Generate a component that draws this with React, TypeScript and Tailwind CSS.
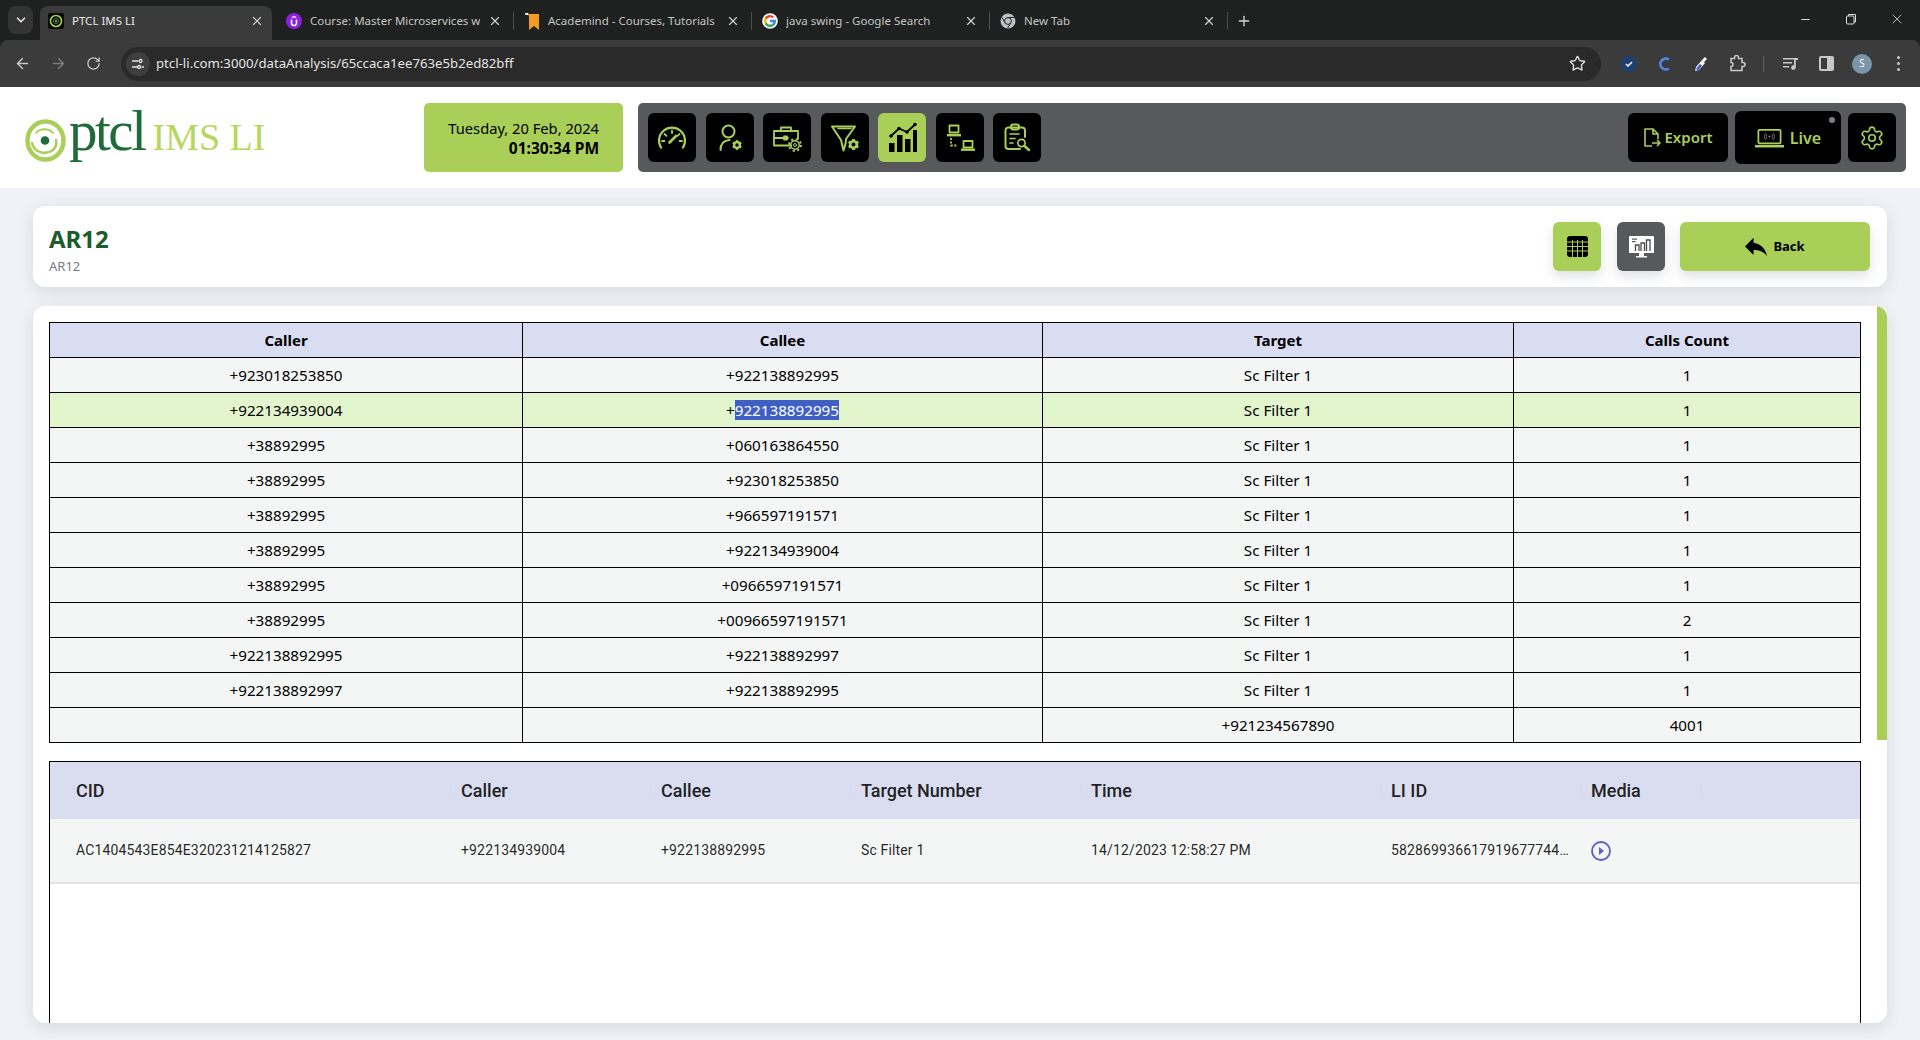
import React from "react";
import { ArrowLeft, ArrowRight, RotateCw, Star, X, Plus, Minus, ChevronDown, Settings } from "lucide-react";

const G = "#a9cf58";

function GearSolid({ cx, cy, r, color }: { cx: number; cy: number; r: number; color: string }) {
  return (
    <g>
      <circle cx={cx} cy={cy} r={r * 0.72} fill="none" stroke={color} strokeWidth={r * 0.56} />
      {[0, 60, 120].map((a) => (
        <rect key={a} x={cx - r * 0.3} y={cy - r * 1.2} width={r * 0.6} height={r * 2.4} fill={color} transform={`rotate(${a} ${cx} ${cy})`} />
      ))}
      <circle cx={cx} cy={cy} r={r * 0.42} fill="#000" />
    </g>
  );
}

function NavIcon({ kind, color }: { kind: number; color: string }) {
  const s = { fill: "none", stroke: color, strokeWidth: 1.8, strokeLinecap: "round" as const, strokeLinejoin: "round" as const };
  return (
    <svg width="34" height="34" viewBox="0 0 34 34">
      {kind === 0 && (
        <g {...s}>
          <path d="M6 26.5 A 13 13 0 1 1 28 26.5" strokeWidth="2.2" />
          <path d="M17 9.5v2.5M9.5 13l2 1.8M24.5 13l-2 1.8M7 20h2.4M27 20h-2.4" />
          <path d="M14.5 21.5 L21 15" strokeWidth="2.6" />
        </g>
      )}
      {kind === 1 && (
        <g>
          <circle cx="15.5" cy="10.5" r="6" {...s} strokeWidth="2" />
          <path d="M7.5 29c0-6 3.5-9.5 9-10" {...s} strokeWidth="2" />
          <GearSolid cx={24} cy={24} r={4} color={color} />
        </g>
      )}
      {kind === 2 && (
        <g>
          <g {...s}>
            <path d="M21 24.5H4V10h24v8" />
            <path d="M4 17h14M11 10V6.5h10V10" />
            <path d="M14 15.5h3v3h-3z" />
          </g>
          <circle cx="25" cy="24" r="4.2" {...s} strokeWidth="1.5" />
          <circle cx="25" cy="24" r="6" fill="none" stroke={color} strokeWidth="1.8" strokeDasharray="2.2 2.5" />
          <circle cx="25" cy="24" r="1.5" {...s} strokeWidth="1" />
        </g>
      )}
      {kind === 3 && (
        <g>
          <path d="M4 5.5h23l-9 12.5-.5 5-2 6.5-2.5-10.500z" {...s} strokeWidth="2" />
          <path d="M10 7.5h13" {...s} strokeWidth="1.5" />
          <GearSolid cx={25.5} cy={23.5} r={4.6} color={color} />
        </g>
      )}
      {kind === 4 && (
        <g fill={color}>
          <rect x="4" y="22" width="5.5" height="9" />
          <rect x="12" y="14" width="5.5" height="17" />
          <rect x="20" y="18" width="5.5" height="13" />
          <rect x="28" y="9" width="4" height="22" />
          <path d="M6 15 L14 7.5 L22 11 L30 3.5" fill="none" stroke={color} strokeWidth="1.8" />
          <circle cx="6" cy="15" r="1.8" />
          <circle cx="14" cy="7.5" r="1.8" />
          <circle cx="22" cy="11" r="1.8" />
          <circle cx="30" cy="3.5" r="1.8" />
        </g>
      )}
      {kind === 5 && (
        <g>
          <rect x="6.5" y="4.5" width="9" height="7" {...s} strokeWidth="1.8" />
          <rect x="4" y="13" width="14" height="2.4" fill={color} />
          <rect x="20.5" y="20" width="9" height="6.5" {...s} strokeWidth="1.8" />
          <rect x="18" y="27.5" width="14" height="2.4" fill={color} />
          <path d="M8 17v7.5h7" fill="none" stroke={color} strokeWidth="1.8" strokeDasharray="2 1.6" />
        </g>
      )}
      {kind === 6 && (
        <g {...s} strokeWidth="2">
          <path d="M20 28H8a3 3 0 0 1-2.5-3V9A3 3 0 0 1 8 6.5h14A3 3 0 0 1 25 9v7" />
          <rect x="11" y="3.5" width="8" height="5" rx="2.2" />
          <path d="M10 13h9M10 17.500h5M10 22h3" strokeWidth="1.7" />
          <circle cx="21.5" cy="22" r="3.6" strokeWidth="1.7" />
          <path d="M24.5 25l4.5 4" strokeWidth="2.4" />
        </g>
      )}
    </svg>
  );
}

function Favicon({ kind }: { kind: number }) {
  if (kind === 0)
    return (
      <svg width="16" height="16" viewBox="0 0 16 16" className="shrink-0">
        <rect width="16" height="16" rx="2" fill="#050805" />
        <circle cx="8" cy="8" r="5.5" fill="none" stroke={G} strokeWidth="1.6" />
        <circle cx="8" cy="8" r="2.6" fill="none" stroke="#2f7d46" strokeWidth="1" />
        <circle cx="8" cy="8" r="1" fill={G} />
      </svg>
    );
  if (kind === 1)
    return (
      <svg width="16" height="16" viewBox="0 0 16 16" className="shrink-0">
        <circle cx="8" cy="8" r="8" fill="#8f1fe0" />
        <path d="M5.5 6.5v3.6a2.5 2.5 0 0 0 5 0V6.5" fill="none" stroke="#fff" strokeWidth="1.5" />
        <path d="M5.8 4.8L8 3.4l2.2 1.4" fill="none" stroke="#fff" strokeWidth="1.2" />
      </svg>
    );
  if (kind === 2)
    return (
      <svg width="16" height="18" viewBox="0 0 16 18" className="shrink-0">
        <path d="M1 1h3l1 1h10v16l-5-4-5 4V3.5L1 2.5z" fill="#f59a23" />
        <path d="M1 1h3v2H2z" fill="#fff" />
      </svg>
    );
  if (kind === 3)
    return (
      <svg width="16" height="16" viewBox="0 0 48 48" className="shrink-0">
        <circle cx="24" cy="24" r="23.500" fill="#fff" />
        <path fill="#EA4335" d="M24 6a18 18 0 0 1 12.200 4.700l-5 5A11 11 0 0 0 14 19.500l-6-4.600A18 18 0 0 1 24 6z" />
        <path fill="#4285F4" d="M42 24.500c0-1.500-.1-2.800-.4-4H24v7.500h10c-.5 2.500-2 4.500-4 5.800l6 4.700C39.700 35 42 30.200 42 24.500z" />
        <path fill="#FBBC05" d="M14 28.300a11 11 0 0 1 0-8.800l-6-4.600a18 18 0 0 0 0 18z" />
        <path fill="#34A853" d="M24 42c4.800 0 9-1.600 12-4.500L30 32.800c-1.600 1.100-3.600 1.700-6 1.700-4.700 0-8.600-3-10-6.200l-6 4.600C11 38.500 17 42 24 42z" />
      </svg>
    );
  return (
    <svg width="16" height="16" viewBox="0 0 16 16" className="shrink-0">
      <circle cx="8" cy="8" r="7.500" fill="#bdc1c6" />
      <path d="M8 4.500h6.500M5 9.700L1.800 4.300M10.900 9.800L7.500 15.300" stroke="#202124" strokeWidth="1" />
      <circle cx="8" cy="8" r="3.400" fill="#bdc1c6" stroke="#202124" strokeWidth="1" />
    </svg>
  );
}

const tabs = [
  { t: "PTCL IMS LI", f: 0 },
  { t: "Course: Master Microservices with Spring", f: 1 },
  { t: "Academind - Courses, Tutorials & More", f: 2 },
  { t: "java swing - Google Search", f: 3 },
  { t: "New Tab", f: 4 },
];

function BrowserChrome() {
  return (
    <div className="bg-[#1f2120]" style={{ fontFamily: "'Noto Sans', sans-serif" }}>
      <div className="h-[40px] flex items-end pl-2 pr-0">
        <div className="w-[25px] h-[28px] mb-[6px] rounded-lg bg-[#343434] flex items-center justify-center mr-[7px] text-[#e3e3e3]">
          <ChevronDown size={14} strokeWidth={3} />
        </div>
        {tabs.map((tab, i) => (
          <React.Fragment key={i}>
            <div className={`w-[232px] h-[34px] flex items-center gap-[8px] px-2 pb-[4px] rounded-t-lg ${i === 0 ? "bg-[#3b3b3b]" : ""}`}>
              <Favicon kind={tab.f} />
              <span className={`flex-1 whitespace-nowrap overflow-hidden text-[11.500px] ${i === 0 ? "text-[#e8e8e8]" : "text-[#c4c6c5]"}`}>{tab.t}</span>
              <X size={14} className="shrink-0 text-[#d0d0d0]" />
            </div>
            <div className="w-[6px] h-[34px] pb-[4px] flex items-center justify-center">
              {i > 0 && <div className="w-px h-[18px] bg-[#4e4e4e]" />}
            </div>
          </React.Fragment>
        ))}
        <div className="h-[34px] pb-[4px] flex items-center ml-[6px] text-[#d4d4d4]">
          <Plus size={16} />
        </div>
        <div className="flex-1" />
        <div className="h-[40px] flex items-center text-[#dcdcdc] pb-[2px]">
          <div className="w-[46px] flex justify-center"><Minus size={13} /></div>
          <div className="w-[46px] flex justify-center">
            <svg width="12" height="12" viewBox="0 0 12 12" fill="none" stroke="currentColor" strokeWidth="1">
              <rect x="1.500" y="3" width="7.500" height="8" rx="1" />
              <path d="M3.500 3V1.500h7v7.500H9" />
            </svg>
          </div>
          <div className="w-[46px] flex justify-center"><X size={16} strokeWidth={1.2} /></div>
        </div>
      </div>
      <div className="h-[47px] bg-[#3b3b3b] rounded-t-lg flex items-center pl-[14px] pr-[14px] text-[#c8c8c8]">
        <ArrowLeft size={17} className="mr-[19px]" />
        <ArrowRight size={17} className="mr-[19px] text-[#7d7d7d]" />
        <RotateCw size={15} className="mr-[20px]" />
        <div className="w-[1480px] h-[34px] rounded-full bg-[#2a2a2a] flex items-center pl-[5px] pr-[15px]">
          <div className="w-[24px] h-[24px] rounded-full bg-[#3e3e3e] flex items-center justify-center mr-[6px]">
            <svg width="14" height="14" viewBox="0 0 14 14" fill="none" stroke="#e3e3e3" strokeWidth="1.300">
              <path d="M1 4h6M10.500 10H13M1 10h5" />
              <circle cx="9.500" cy="4" r="1.500" />
              <circle cx="8" cy="10" r="1.500" />
            </svg>
          </div>
          <span className="text-[13.200px] text-[#e3e3e3] flex-1">ptcl-li.com:3000/dataAnalysis/65ccaca1ee763e5b2ed82bff</span>
          <Star size={17} className="text-[#dcdcdc]" />
        </div>
        <div className="flex-1" />
        <div className="flex items-center">
          <div className="w-[16px] h-[16px] rounded-full bg-[#1d3f72] flex items-center justify-center mr-[20px]">
            <svg width="10" height="10" viewBox="0 0 10 10" fill="none" stroke="#fff" strokeWidth="1.500"><path d="M2 5l2 2 4-4" /></svg>
          </div>
          <svg width="14" height="16" viewBox="0 0 14 16" fill="none" stroke="#4f86ec" strokeWidth="2.600" className="mr-[22px]"><path d="M12 3.500a5.500 5.500 0 1 0 0 9" /></svg>
          <svg width="16" height="18" viewBox="0 0 16 18" className="mr-[20px]">
            <path d="M2 16l1-4 6-7 3 3-6 7z" fill="#f5f5f5" />
            <path d="M3 14l4-5 2 1.500-4 5z" fill="#3a55c8" />
            <path d="M9 5l3-3 2 2-3 3z" fill="#fff" />
          </svg>
          <svg width="17" height="17" viewBox="0 0 17 17" fill="none" stroke="#c8c8c8" strokeWidth="1.500" className="mr-[17px]">
            <path d="M2 3.500h3.500V2.500a2 2 0 0 1 4 0v1H13v4h1a2 2 0 0 1 0 4h-1V15.500H2v-4a2 2 0 0 0 0-4z" />
          </svg>
          <div className="w-px h-[16px] bg-[#636363] mr-[19px]" />
          <svg width="16" height="14" viewBox="0 0 16 14" className="mr-[20px]" fill="#c8c8c8">
            <rect x="0" y="1" width="11" height="1.500" /><rect x="0" y="5" width="9" height="1.500" /><rect x="0" y="9" width="6" height="1.500" />
            <path d="M11 1h4v2h-2.200v7.500a2.300 2.300 0 1 1-1.800-2.200z" />
          </svg>
          <div className="w-[15px] h-[15px] rounded-[2px] border-2 border-[#c8c8c8] mr-[18px] flex">
            <div className="w-1/2" /><div className="w-1/2 bg-[#c8c8c8]" />
          </div>
          <div className="w-[20px] h-[20px] rounded-full bg-[#7a96a8] text-white text-[10px] flex items-center justify-center mr-[18px]">S</div>
          <div className="w-[16px] flex flex-col items-center gap-[3px]">
            <div className="w-[3px] h-[3px] rounded-full bg-[#c8c8c8]" />
            <div className="w-[3px] h-[3px] rounded-full bg-[#c8c8c8]" />
            <div className="w-[3px] h-[3px] rounded-full bg-[#c8c8c8]" />
          </div>
        </div>
      </div>
    </div>
  );
}

function Logo() {
  return (
    <div className="flex items-center w-[424px] pl-[25px]" style={{ fontFamily: "'Liberation Serif', serif" }}>
      <svg width="41" height="43" viewBox="0 0 41 43" className="mr-[3px] mt-[5px]">
        <ellipse cx="20.500" cy="21.500" rx="18" ry="19" fill="none" stroke={G} strokeWidth="4.500" />
        <path d="M7 24 C9 33 20 37 28 31 C31 28 32 25 31 21" fill="none" stroke={G} strokeWidth="2.600" strokeLinecap="round" />
        <path d="M11 14 C15 9 24 9 28 14" fill="none" stroke={G} strokeWidth="1.800" strokeLinecap="round" />
        <circle cx="20" cy="21.500" r="4.300" fill="#1f6b3a" />
      </svg>
      <div className="flex items-baseline mb-[15px]">
        <span className="text-[57px] leading-none tracking-[-2.500px] text-[#1f6b3a]">ptcl</span>
        <span className="text-[38px] leading-none ml-[8px] text-[#b7d65e]">IMS LI</span>
      </div>
    </div>
  );
}

const navBtn = "w-[48px] h-[49px] rounded-md flex items-center justify-center";

function Header() {
  return (
    <div className="h-[101px] bg-white flex items-start pt-[16px]" style={{ fontFamily: "'Noto Sans', sans-serif" }}>
      <div className="h-[69px] flex items-center">
        <Logo />
      </div>
      <div className="w-[199px] h-[69px] rounded-[5px] bg-[#a9cf58] flex flex-col justify-center items-end pr-[24px] text-black text-[14.700px] leading-[20px] mr-[15px]">
        <div>Tuesday, 20 Feb, 2024</div>
        <div className="font-bold text-[15.500px]">01:30:34 PM</div>
      </div>
      <div className="w-[1268px] h-[69px] rounded-[5px] bg-[#58595b] flex items-center pl-[10px] pr-[10px] gap-[9.500px]">
        {[0, 1, 2, 3, 4, 5, 6].map((k) => (
          <div key={k} className={`${navBtn} ${k === 4 ? "bg-[#a9cf58]" : "bg-black"}`}>
            <NavIcon kind={k} color={k === 4 ? "#000" : G} />
          </div>
        ))}
        <div className="flex-1" />
        <div className="flex items-center gap-[7px]">
          <div className="w-[100px] h-[49px] rounded-md bg-black flex items-center justify-center gap-[3px] text-[#a9cf58] text-[15px] font-semibold">
            <svg width="18" height="21" viewBox="0 0 18 21" fill="none" stroke={G} strokeWidth="1.600" strokeLinejoin="round">
              <path d="M9 19H2V2h8l5 5v5M10 2v5h5" />
              <path d="M9 16h8M14 13l3 3-3 3" />
            </svg>
            Export
          </div>
          <div className="relative w-[106px] h-[53px] rounded-md bg-black flex items-center justify-center gap-[6px] text-[#a9cf58] text-[16px] font-semibold">
            <svg width="29" height="20" viewBox="0 0 30 20" fill="none" stroke={G} strokeWidth="1.800">
              <rect x="3.500" y="1.500" width="23" height="14" rx="1" />
              <path d="M0 18.500h30" strokeWidth="2.600" />
              <circle cx="15" cy="8.500" r="1" fill="#888" stroke="none" />
              <path d="M12.500 6c-1 1.500-1 3.500 0 5M17.500 6c1 1.500 1 3.500 0 5" stroke="#888" strokeWidth="0.800" />
              <path d="M11 5c-1.500 2-1.500 5 0 7M19 5c1.500 2 1.500 5 0 7" stroke="#888" strokeWidth="0.800" />
            </svg>
            Live
            <div className="absolute right-[6px] top-[6px] w-[6px] h-[6px] rounded-full bg-[#7d7f8f]" />
          </div>
          <div className={`${navBtn} bg-black`}>
            <Settings size={26} strokeWidth={1.500} color={G} />
          </div>
        </div>
      </div>
    </div>
  );
}

function TitleCard() {
  return (
    <div className="h-[81px] bg-white rounded-xl shadow-[0_4px_16px_rgba(60,64,90,0.14)] flex items-center pl-4 pr-[17px]" style={{ fontFamily: "'Noto Sans', sans-serif" }}>
      <div className="flex-1 pt-[6px]">
        <div className="text-[24px] leading-[30px] font-bold text-[#1d5a2c]">AR12</div>
        <div className="text-[13px] leading-[18px] mt-[3px] text-[#777985]">AR12</div>
      </div>
      <div className="w-[48px] h-[49px] rounded-md bg-[#a9cf58] flex items-center justify-center shadow-[0_6px_12px_rgba(60,64,90,0.15)] mr-[16px]">
        <svg width="21" height="21" viewBox="0 0 21 21">
          <rect width="21" height="21" rx="3" fill="#000" />
          <path d="M0 6h21M0 10.500h21M0 15h21M5.500 4v17M10.500 4v17M15.500 4v17" stroke="#a9cf58" strokeWidth="1" />
        </svg>
      </div>
      <div className="w-[48px] h-[49px] rounded-md bg-[#58595b] flex items-center justify-center shadow-[0_6px_12px_rgba(60,64,90,0.15)] mr-[15px]">
        <svg width="25" height="23" viewBox="0 0 25 23">
          <path d="M1 1h23a1 1 0 0 1 1 1v15a1 1 0 0 1-1 1H1a1 1 0 0 1-1-1V2a1 1 0 0 1 1-1z" fill="#fff" />
          <rect x="3" y="3.500" width="5" height="1.200" fill="#555" />
          <rect x="3" y="6" width="3.500" height="1.200" fill="#555" />
          <path d="M6.500 16v-6h3.500v6M12 16V8h3.500v8M17.500 16V5H21v11" fill="none" stroke="#4a4a4a" strokeWidth="1.300" />
          <rect x="0" y="16" width="25" height="2" fill="#fff" />
          <path d="M10 18h5v3h-5zM7 21h11v1.500H7z" fill="#fff" />
        </svg>
      </div>
      <div className="w-[190px] h-[49px] rounded-md bg-[#a9cf58] flex items-center justify-center gap-[6px] text-[13px] font-bold text-black shadow-[0_6px_12px_rgba(60,64,90,0.15)]">
        <svg width="22" height="22" viewBox="3 4 18 17" fill="#000"><path d="M10 9V5l-7 7 7 7v-4.100c5 0 8.500 1.600 11 5.100-1-5-4-10-11-11z" /></svg>
        Back
      </div>
    </div>
  );
}

const rows = [
  ["+923018253850", "+922138892995", "Sc Filter 1", "1"],
  ["+922134939004", "+922138892995", "Sc Filter 1", "1"],
  ["+38892995", "+060163864550", "Sc Filter 1", "1"],
  ["+38892995", "+923018253850", "Sc Filter 1", "1"],
  ["+38892995", "+966597191571", "Sc Filter 1", "1"],
  ["+38892995", "+922134939004", "Sc Filter 1", "1"],
  ["+38892995", "+0966597191571", "Sc Filter 1", "1"],
  ["+38892995", "+00966597191571", "Sc Filter 1", "2"],
  ["+922138892995", "+922138892997", "Sc Filter 1", "1"],
  ["+922138892997", "+922138892995", "Sc Filter 1", "1"],
  ["", "", "+921234567890", "4001"],
];

function SummaryTable() {
  const td = "border border-black text-center h-[35px] p-0";
  return (
    <table className="w-[1811px] table-fixed border-collapse border border-black text-[15.200px] font-[450] text-black" style={{ fontFamily: "'Noto Sans', sans-serif" }}>
      <colgroup>
        <col className="w-[473px]" />
        <col className="w-[520px]" />
        <col className="w-[471px]" />
        <col className="w-[347px]" />
      </colgroup>
      <thead>
        <tr className="bg-[#d9ddf1]">
          {["Caller", "Callee", "Target", "Calls Count"].map((h) => (
            <th key={h} className={`${td} font-bold text-[15px]`}>{h}</th>
          ))}
        </tr>
      </thead>
      <tbody>
        {rows.map((r, i) => (
          <tr key={i} className={i === 1 ? "bg-[#e3f5cd]" : "bg-[#f4f6f5]"}>
            {r.map((c, j) => (
              <td key={j} className={td}>
                {i === 1 && j === 1 ? (
                  <>
                    +<span className="bg-[#3f5fc5] text-white">{c.slice(1)}</span>
                  </>
                ) : (
                  c
                )}
              </td>
            ))}
          </tr>
        ))}
      </tbody>
    </table>
  );
}

const cols = "grid grid-cols-[395px_200px_200px_230px_300px_200px_1fr]";

function DataGrid() {
  const heads = ["CID", "Caller", "Callee", "Target Number", "Time", "LI ID", "Media"];
  const vals = ["AC1404543E854E320231214125827", "+922134939004", "+922138892995", "Sc Filter 1", "14/12/2023 12:58:27 PM", "5828699366179196777443210", ""];
  return (
    <div className="mt-[18px] w-[1812px] flex-1 border-x border-t border-black" style={{ fontFamily: "Roboto, sans-serif" }}>
      <div className={`${cols} h-[57px] bg-[#dadcef] items-center text-[18px] font-medium text-[rgba(0,0,0,0.87)]`}>
        {heads.map((h, i) => (
          <div key={h} className={i === 0 ? "pl-[26px]" : "pl-[16px] relative"}>
            {i > 0 && <div className="absolute left-[6px] top-[6px] w-px h-[14px] bg-[#d6d8ec]" />}
            {h}
            {i === 6 && <div className="absolute left-[126px] top-[6px] w-px h-[14px] bg-[#d6d8ec]" />}
          </div>
        ))}
      </div>
      <div className={`${cols} h-[65px] bg-[#f4f6f5] border-b-2 border-[#e2e3e3] items-center text-[14px] tracking-[0.15px] text-[rgba(0,0,0,0.87)]`}>
        {vals.map((v, i) => (
          <div key={i} className={i === 0 ? "pl-[26px]" : "pl-[16px]"}>
            {i === 5 ? (
              <div className="w-[178px] truncate">{v}</div>
            ) : i === 6 ? (
              <svg width="20" height="20" viewBox="0 0 20 20" className="mt-[1px]">
                <circle cx="10" cy="10" r="9" fill="none" stroke="#5a5fc4" strokeWidth="1.800" />
                <path d="M8 6l5 4-5 4z" fill="#5a5fc4" />
              </svg>
            ) : (
              v
            )}
          </div>
        ))}
      </div>
    </div>
  );
}

export default function App() {
  return (
    <div className="w-[1920px] h-[1040px] overflow-hidden bg-[#f0f2f7] flex flex-col">
      <BrowserChrome />
      <Header />
      <div className="flex-1 px-[33px] pt-[18px] pb-[17px] flex flex-col gap-[19px] min-h-0">
        <TitleCard />
        <div className="flex-1 min-h-0 bg-white rounded-xl shadow-[0_4px_16px_rgba(60,64,90,0.14)] overflow-hidden flex">
          <div className="flex-1 min-w-0 pl-4 pt-4 flex flex-col">
            <SummaryTable />
            <DataGrid />
          </div>
          <div className="w-[10px] h-[434px] bg-[#a9cf58]" />
        </div>
      </div>
    </div>
  );
}
